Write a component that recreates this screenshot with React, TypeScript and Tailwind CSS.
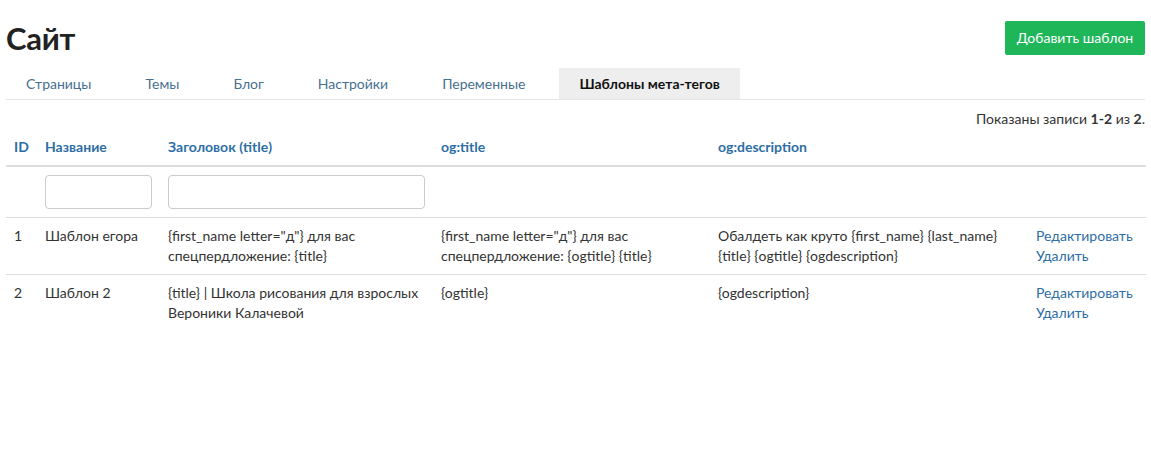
const tabs = ["Страницы", "Темы", "Блог", "Настройки", "Переменные", "Шаблоны мета-тегов"]

type Row = {
    id: number
    name: string
    title: string
    ogTitle: string
    ogDescription: string
}

const rows: Row[] = [
    {
        id: 1,
        name: "Шаблон егора",
        title: '{first_name letter="д"} для вас спецпердложение: {title}',
        ogTitle: '{first_name letter="д"} для вас спецпердложение: {ogtitle} {title}',
        ogDescription: "Обалдеть как круто {first_name} {last_name} {title} {ogtitle} {ogdescription}",
    },
    {
        id: 2,
        name: "Шаблон 2",
        title: "{title} | Школа рисования для взрослых Вероники Калачевой",
        ogTitle: "{ogtitle}",
        ogDescription: "{ogdescription}",
    },
]

const App = () => {
    return (
        <div className="w-full min-h-screen bg-white px-[6px] pt-[21px] text-[14px] leading-[20px] text-[#333] font-['Lato','Open_Sans',sans-serif]">
            <div className="flex items-center justify-between h-[34px]">
                <h1 className="text-[31px] leading-[34px] font-bold text-[#222] tracking-[-0.3px]">Сайт</h1>
                <button className="h-[34px] w-[140px] bg-[#1fb65a] text-white text-[14px] rounded-[2px]">
                    Добавить шаблон
                </button>
            </div>

            <ul className="flex gap-[14px] mt-[13px] border-b border-[#e5e5e5] h-[32px]">
                {tabs.map((t, i) => (
                    <li
                        key={t}
                        className={
                            i === tabs.length - 1
                                ? "px-5 flex items-center bg-[#eeeeee] font-bold text-[#111]"
                                : "px-5 flex items-center text-[#476f8f]"
                        }
                    >
                        {t}
                    </li>
                ))}
            </ul>

            <div className="mt-[9px] text-right">
                Показаны записи <b>1-2</b> из <b>2</b>.
            </div>

            <table className="w-full border-collapse table-fixed">
                <colgroup>
                    <col className="w-[31px]" />
                    <col className="w-[123px]" />
                    <col className="w-[273px]" />
                    <col className="w-[277px]" />
                    <col className="w-[318px]" />
                    <col className="w-[118px]" />
                </colgroup>
                <thead>
                    <tr className="border-b-2 border-[#dddddd] text-left text-[#2d6ea5] font-bold">
                        <th className="p-2 font-bold">ID</th>
                        <th className="p-2 font-bold">Название</th>
                        <th className="p-2 font-bold">Заголовок (title)</th>
                        <th className="p-2 font-bold">og:title</th>
                        <th className="p-2 font-bold">og:description</th>
                        <th className="p-2"></th>
                    </tr>
                </thead>
                <tbody>
                    <tr className="border-b border-[#dddddd]">
                        <td className="p-2"></td>
                        <td className="p-2">
                            <input className="w-full h-[34px] border border-[#cccccc] rounded-[4px] outline-none" />
                        </td>
                        <td className="p-2">
                            <input className="w-[257px] h-[34px] border border-[#cccccc] rounded-[4px] outline-none" />
                        </td>
                        <td className="p-2"></td>
                        <td className="p-2"></td>
                        <td className="p-2"></td>
                    </tr>
                    {rows.map((r) => (
                        <tr key={r.id} className="border-b border-[#dddddd] align-top last:border-b-0">
                            <td className="p-2">{r.id}</td>
                            <td className="p-2">{r.name}</td>
                            <td className="p-2">{r.title}</td>
                            <td className="p-2">{r.ogTitle}</td>
                            <td className="p-2">{r.ogDescription}</td>
                            <td className="p-2 text-[#2d6ea5]">
                                <div>Редактировать</div>
                                <div>Удалить</div>
                            </td>
                        </tr>
                    ))}
                </tbody>
            </table>
        </div>
    )
}

export default App
